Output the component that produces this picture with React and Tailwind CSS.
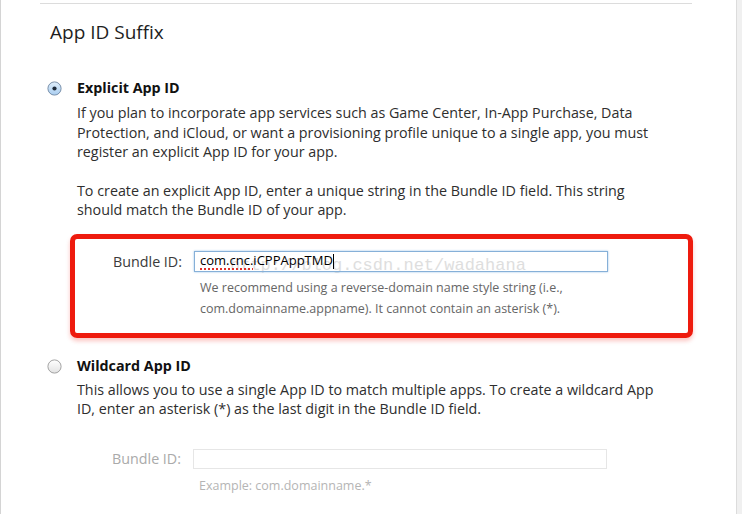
import React from "react";

function Radio({ checked }) {
  return (
    <svg width="15" height="15" viewBox="0 0 15 15" className="shrink-0">
      <defs>
        <linearGradient id={checked ? "rg1" : "rg2"} x1="0" y1="0" x2="0" y2="1">
          {checked ? (
            <>
              <stop offset="0" stopColor="#dfeefb" />
              <stop offset="1" stopColor="#a9cdf0" />
            </>
          ) : (
            <>
              <stop offset="0" stopColor="#ffffff" />
              <stop offset="1" stopColor="#e2e2e2" />
            </>
          )}
        </linearGradient>
      </defs>
      <circle
        cx="7.5"
        cy="7.5"
        r="6.6"
        fill={`url(#${checked ? "rg1" : "rg2"})`}
        stroke={checked ? "#6f87a3" : "#9a9a9a"}
        strokeWidth="0.9"
      />
      {checked && <circle cx="7.5" cy="7.5" r="2.1" fill="#1d2a3a" />}
    </svg>
  );
}

export default function App() {
  const font = { fontFamily: '"Open Sans", "Liberation Sans", sans-serif' };
  return (
    <div
      className="w-[742px] h-[514px] bg-white overflow-hidden flex border-l border-[#d4d4d4] text-[#2e2e2e]"
      style={font}
    >
      <div className="flex-1 flex flex-col">
        <div className="ml-[39px] mt-[3px] w-[652px] h-px bg-[#dcdcdc]" />
        <div className="ml-[49px] mt-[17px] text-[19px] leading-[22px] text-[#1e1e1e]">
          App ID Suffix
        </div>

        <div className="ml-[46px] mt-[35px] flex gap-[15px]">
          <div className="pt-[3px]">
            <Radio checked />
          </div>
          <div>
            <div className="text-[14.3px] leading-[20px] font-bold text-[#111]">Explicit App ID</div>
            <p className="mt-[5px] text-[14.3px] leading-[19.5px]">
              If you plan to incorporate app services such as Game Center, In-App Purchase, Data
              <br />
              Protection, and iCloud, or want a provisioning profile unique to a single app, you must
              <br />
              register an explicit App ID for your app.
            </p>
            <p className="mt-[19px] text-[14.3px] leading-[19.5px]">
              To create an explicit App ID, enter a unique string in the Bundle ID field. This string
              <br />
              should match the Bundle ID of your app.
            </p>
          </div>
        </div>

        <div className="relative ml-[69px] mt-[14px] w-[623px] h-[104px] border-[5px] border-[#ee1b0e] rounded-[7px] shadow-[0_3px_4px_rgba(238,27,14,0.25)]">
          <div
            className="absolute left-[155px] top-[17px] text-[17px] leading-[20px] text-[#dedede]"
            style={{ fontFamily: '"Liberation Mono", monospace' }}
          >
            http://blog.csdn.net/wadahana
          </div>
          <div className="relative mt-[12px] flex items-center">
            <div className="w-[107px] text-right text-[14.3px] leading-[21px] text-[#3a3a3a]">
              Bundle ID:
            </div>
            <div className="ml-[12px] w-[414px] h-[21px] border border-[#86b0d8] shadow-[0_0_2px_#9cc3e8] flex items-center pl-[5px] text-[13px] text-black">
              <span className="underline decoration-dotted decoration-[#e0302a] decoration-2 underline-offset-[3px]">
                com.cnc.
              </span>
              <span>iCPPAppTMD</span>
              <span className="w-px h-[15px] bg-black" />
            </div>
          </div>
          <div className="ml-[125px] mt-[5px] text-[12.5px] leading-[21px] text-[#666]">
            We recommend using a reverse-domain name style string (i.e.,
            <br />
            com.domainname.appname). It cannot contain an asterisk (*).
          </div>
        </div>

        <div className="ml-[46px] mt-[18px] flex gap-[15px]">
          <div className="pt-[3px]">
            <Radio checked={false} />
          </div>
          <div>
            <div className="text-[14.3px] leading-[20px] font-bold text-[#111]">Wildcard App ID</div>
            <p className="mt-[4px] text-[14.3px] leading-[19.5px]">
              This allows you to use a single App ID to match multiple apps. To create a wildcard App
              <br />
              ID, enter an asterisk (*) as the last digit in the Bundle ID field.
            </p>
          </div>
        </div>

        <div className="mt-[30px] flex items-center">
          <div className="w-[180px] text-right text-[14.3px] leading-[20px] text-[#aaa]">Bundle ID:</div>
          <div className="ml-[12px] w-[414px] h-[20px] border border-[#e6e6e6]" />
        </div>
        <div className="ml-[198px] mt-[6px] text-[12.5px] leading-[21px] text-[#b5b5b5]">
          Example: com.domainname.*
        </div>
      </div>
      <div className="w-[6px] border-l border-[#dcdcdc] bg-[#f0f0f0]" />
    </div>
  );
}
